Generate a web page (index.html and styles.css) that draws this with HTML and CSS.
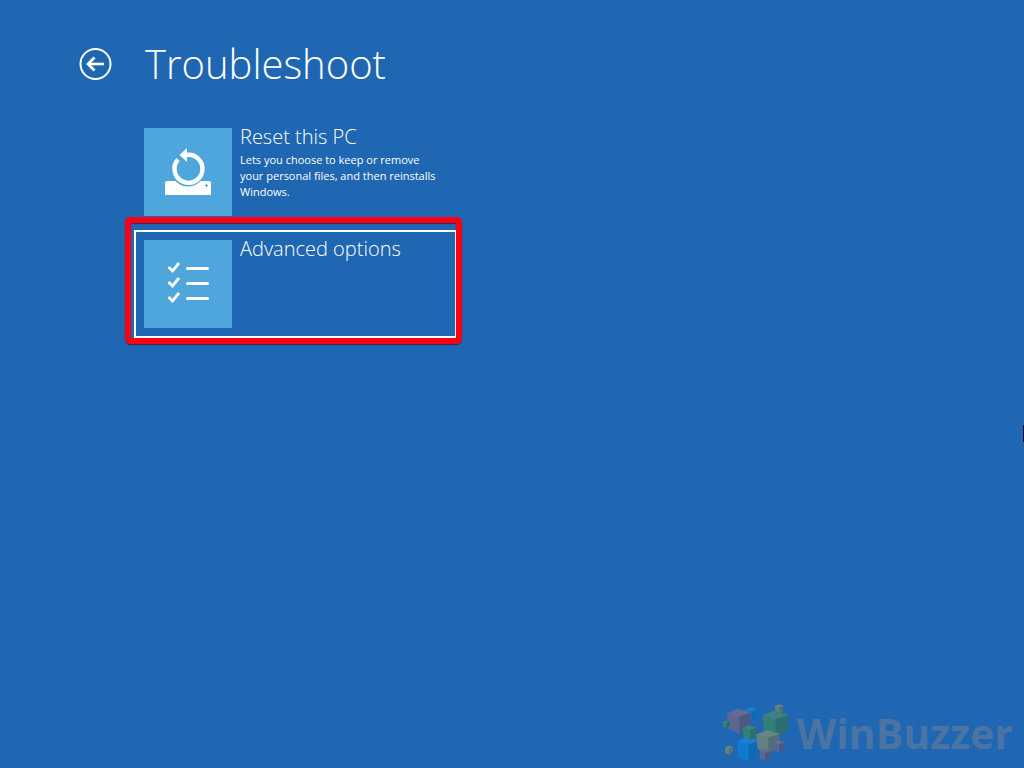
FILE: index.html
```html
<!DOCTYPE html>
<html lang="en">
<head>
  <meta charset="utf-8">
  <title>Troubleshoot</title>
  <link rel="stylesheet" href="styles.css">
</head>
<body>
  <header class="header">
    <button class="back" type="button" aria-label="Back">
      <svg width="34" height="34" viewBox="0 0 34 34" fill="none" stroke="#fff">
        <circle cx="16.500" cy="17" r="15" stroke-width="2"/>
        <path d="M9 17H25" stroke-width="2.600"/>
        <path d="M15.500 10.500L9 17L15.500 23.500" stroke-width="2.800"/>
      </svg>
    </button>
    <h1>Troubleshoot</h1>
  </header>

  <main class="options">
    <button class="option" type="button">
      <span class="tile">
        <svg width="88" height="88" viewBox="0 0 88 88">
          <path d="M23 53H65Q67 53 67 55V67H21V55Q21 53 23 53Z" fill="#fff"/>
          <circle cx="44" cy="41" r="17.500" fill="#4ea6dc"/>
          <path d="M34 31.500A14 14 0 1 0 42 27" fill="none" stroke="#fff" stroke-width="4.400"/>
          <path d="M35.500 27L43 20V34Z" fill="#fff"/>
          <path d="M61 57.500H64M62.500 56V59" stroke="#4ea6dc" stroke-width="1"/>
        </svg>
      </span>
      <span class="text">
        <span class="name">Reset this PC</span>
        <span class="detail">Lets you choose to keep or remove your personal files, and then reinstalls Windows.</span>
      </span>
    </button>

    <button class="option selected" type="button">
      <span class="tile">
        <svg width="88" height="88" viewBox="0 0 88 88" fill="none" stroke="#fff">
          <path d="M24.500 27L28.500 31L35 23M24.500 42L28.500 46L35 38M24.500 57L28.500 61L35 53" stroke-width="2.800"/>
          <path d="M43.500 28.500H63.500M43.500 43.500H63.500M43.500 58.500H63.500" stroke-width="3" stroke-linecap="round"/>
        </svg>
      </span>
      <span class="text">
        <span class="name">Advanced options</span>
      </span>
      <span class="highlight"></span>
    </button>
  </main>

  <footer class="brand">
    <svg width="80" height="70" viewBox="0 0 240 210">
      <defs>
        <symbol id="cube" viewBox="0 0 100 100" preserveAspectRatio="none">
          <path d="M44 0L100 15L96 74L52 100L7 80L0 18Z" fill="currentColor"/>
          <path d="M44 0L100 15L51 32L0 18Z" fill="#fff" fill-opacity=".04"/>
          <path d="M51 32L100 15L96 74L52 100Z" fill="#103050" fill-opacity=".22"/>
        </symbol>
      </defs>
      <use href="#cube" class="blue" x="84" y="27" width="38" height="40"/>
      <use href="#cube" class="mauve" x="30" y="32" width="72" height="76"/>
      <use href="#cube" class="green" x="16" y="67" width="23" height="24"/>
      <use href="#cube" class="olive" x="173" y="19" width="27" height="29"/>
      <use href="#cube" class="green" x="136" y="38" width="78" height="80"/>
      <use href="#cube" class="blue" x="59" y="116" width="68" height="76"/>
      <use href="#cube" class="green" x="77" y="82" width="42" height="44"/>
      <use href="#cube" class="olive" x="117" y="97" width="72" height="70"/>
      <use href="#cube" class="mauve" x="168" y="127" width="36" height="36"/>
      <use href="#cube" class="mauve" x="127" y="153" width="33" height="36"/>
      <use href="#cube" class="olive" x="23" y="143" width="26" height="28"/>
    </svg>
    <span class="brand-name">WinBuzzer</span>
  </footer>

  <span class="pointer"></span>
</body>
</html>
```

FILE: styles.css
```css
* {
  box-sizing: border-box;
}
body {
  display: flex;
  flex-direction: column;
  min-height: 100vh;
  margin: 0;
  background: #1f67b2;
  color: #fff;
  font-family: "Open Sans", "Noto Sans", sans-serif;
}
button {
  padding: 0;
  border: 0;
  background: none;
  color: inherit;
  font: inherit;
  text-align: left;
}
svg {
  display: block;
}
.header {
  display: flex;
  align-items: center;
  gap: 32px;
  padding: 34px 79px 24px;
}
h1 {
  margin: 0;
  font-size: 40px;
  font-weight: 300;
  line-height: 60px;
}
.options {
  display: flex;
  flex-direction: column;
  align-items: flex-start;
  gap: 4px;
  padding: 0 134px;
}
.option {
  position: relative;
  display: flex;
  align-items: flex-start;
  gap: 8px;
  width: 100%;
  max-width: 323px;
  padding: 8px;
  border: 2px solid transparent;
}
.selected {
  border-color: #fff;
}
.tile {
  flex: none;
  background: #4ea6dc;
}
.text {
  flex: 1;
}
.name,
.detail {
  display: block;
}
.name {
  font-size: 20px;
  font-weight: 300;
  line-height: 18px;
}
.detail {
  max-width: 200px;
  margin-top: 6px;
  font-size: 11px;
  line-height: 16px;
}
/* red marker drawn around the chosen option */
.highlight {
  position: absolute;
  inset: -15px -7px -8px -11px;
  border: 6px solid #fb0013;
  border-radius: 5px;
  box-shadow: 0 1px 1px #2b2a5c, inset 0 1px 1px #2b2a5c;
}
.brand {
  display: flex;
  align-items: center;
  align-self: flex-end;
  margin-top: auto;
  padding-right: 11px;
}
.brand-name {
  color: #4a74a3;
  font-size: 41px;
  font-weight: 700;
  line-height: 70px;
}
.blue {
  color: #0f7bcf;
}
.mauve {
  color: #5c6691;
}
.green {
  color: #357f79;
}
.olive {
  color: #628080;
}
.pointer {
  position: fixed;
  top: 425px;
  right: 0;
  width: 1px;
  height: 17px;
  background: #000820;
}
```
